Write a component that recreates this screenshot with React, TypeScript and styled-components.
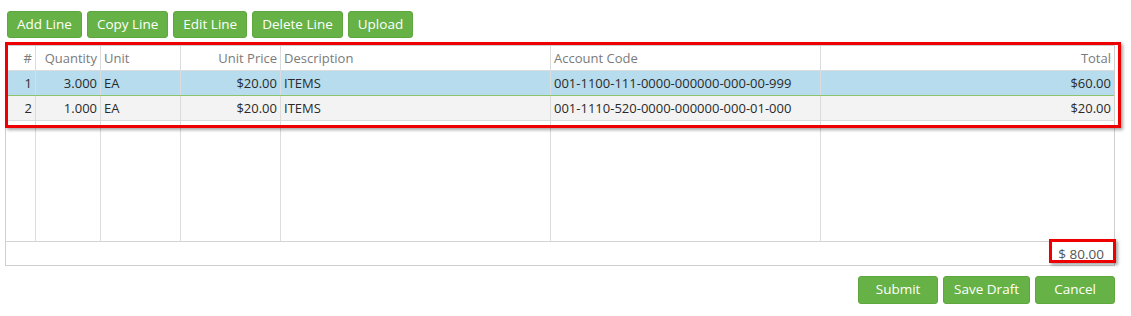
import styled, {createGlobalStyle} from "styled-components";

const GlobalStyle = createGlobalStyle`
    body {
        margin: 0;
        background: #ffffff;
        font-family: "Open Sans", "Noto Sans", Arial, sans-serif;
    }
`;

const Page = styled.div`
    width: 1131px;
    padding: 11px 16px 0 5px;
    box-sizing: border-box;
`;

const Toolbar = styled.div`
    display: flex;
    gap: 5px;
    padding-left: 2px;
    margin-bottom: 7px;
`;

const Actions = styled.div`
    display: flex;
    justify-content: flex-end;
    gap: 5px;
    margin-top: 10px;
`;

const GreenButton = styled.button<{ $wide?: boolean }>`
    height: ${({$wide}) => ($wide ? "28px" : "27px")};
    min-width: ${({$wide}) => ($wide ? "80px" : "0")};
    padding: 0 ${({$wide}) => ($wide ? "10px" : "9px")};
    background: #67b246;
    border: 1px solid #5ea63e;
    border-radius: 3px;
    color: #ffffff;
    font-family: "Open Sans", "Noto Sans", Arial, sans-serif;
    font-size: 13.5px;
    line-height: 1;
    cursor: pointer;
`;

const Grid = styled.div`
    border: 1px solid #cfcfcf;
`;

const Highlighted = styled.div`
    position: relative;
`;

const Marker = styled.div<{ $top: number; $right: number; $bottom: number; $left: number }>`
    position: absolute;
    top: ${({$top}) => $top}px;
    right: ${({$right}) => $right}px;
    bottom: ${({$bottom}) => $bottom}px;
    left: ${({$left}) => $left}px;
    border: 3px solid #ee0000;
    box-shadow: 2px 2px 3px rgba(0, 0, 0, 0.35);
    pointer-events: none;
`;

const Row = styled.div<{ $bg?: string; $line?: string; $height?: number }>`
    display: grid;
    grid-template-columns: 30px 65px 80px 100px 270px 270px 1fr;
    height: ${({$height}) => $height ?? 24}px;
    background: ${({$bg}) => $bg ?? "transparent"};
    border-bottom: 1px solid ${({$line}) => $line ?? "#dcdcdc"};
`;

const Cell = styled.div<{ $right?: boolean; $head?: boolean }>`
    display: flex;
    align-items: center;
    justify-content: ${({$right}) => ($right ? "flex-end" : "flex-start")};
    padding: 0 3px;
    border-right: 1px solid #dcdcdc;
    font-size: 13px;
    color: ${({$head}) => ($head ? "#7a7a7a" : "#2a2a2a")};
    white-space: nowrap;
    overflow: hidden;

    &:last-child {
        border-right: none;
    }
`;

const Filler = styled(Row)`
    border-bottom: none;
`;

const Footer = styled.div`
    display: flex;
    justify-content: flex-end;
    height: 23px;
    border-top: 1px solid #d4d4d4;
`;

const FooterTotal = styled.div`
    position: relative;
    display: flex;
    align-items: center;
    padding: 0 10px;
    font-size: 13.5px;
    color: #555;
`;

const columns = [
    {label: "#", right: true},
    {label: "Quantity", right: true},
    {label: "Unit"},
    {label: "Unit Price", right: true},
    {label: "Description"},
    {label: "Account Code"},
    {label: "Total", right: true},
];

const lines = [
    ["1", "3.000", "EA", "$20.00", "ITEMS", "001-1100-111-0000-000000-000-00-999", "$60.00"],
    ["2", "1.000", "EA", "$20.00", "ITEMS", "001-1110-520-0000-000000-000-01-000", "$20.00"],
];

export default function App() {
    return (
        <Page>
            <GlobalStyle/>
            <Toolbar>
                <GreenButton>Add Line</GreenButton>
                <GreenButton>Copy Line</GreenButton>
                <GreenButton>Edit Line</GreenButton>
                <GreenButton>Delete Line</GreenButton>
                <GreenButton>Upload</GreenButton>
            </Toolbar>
            <Grid>
                <Highlighted>
                    <Row>
                        {columns.map((c) => (
                            <Cell key={c.label} $right={c.right} $head>{c.label}</Cell>
                        ))}
                    </Row>
                    {lines.map((line, i) => (
                        <Row
                            key={line[0]}
                            $bg={i === 0 ? "#b7dcee" : "#f3f3f3"}
                            $line={i === 0 ? "#8cc46e" : "#dcdcdc"}
                        >
                            {line.map((v, j) => (
                                <Cell key={j} $right={columns[j].right}>{v}</Cell>
                            ))}
                        </Row>
                    ))}
                    <Marker $top={-4} $right={-7} $bottom={-7} $left={-1}/>
                </Highlighted>
                <Filler $height={120}>
                    {columns.map((c) => <Cell key={c.label}/>)}
                </Filler>
                <Footer>
                    <FooterTotal>
                        $ 80.00
                        <Marker $top={-3} $right={-2} $bottom={2} $left={1}/>
                    </FooterTotal>
                </Footer>
            </Grid>
            <Actions>
                <GreenButton $wide>Submit</GreenButton>
                <GreenButton $wide>Save Draft</GreenButton>
                <GreenButton $wide>Cancel</GreenButton>
            </Actions>
        </Page>
    );
}
